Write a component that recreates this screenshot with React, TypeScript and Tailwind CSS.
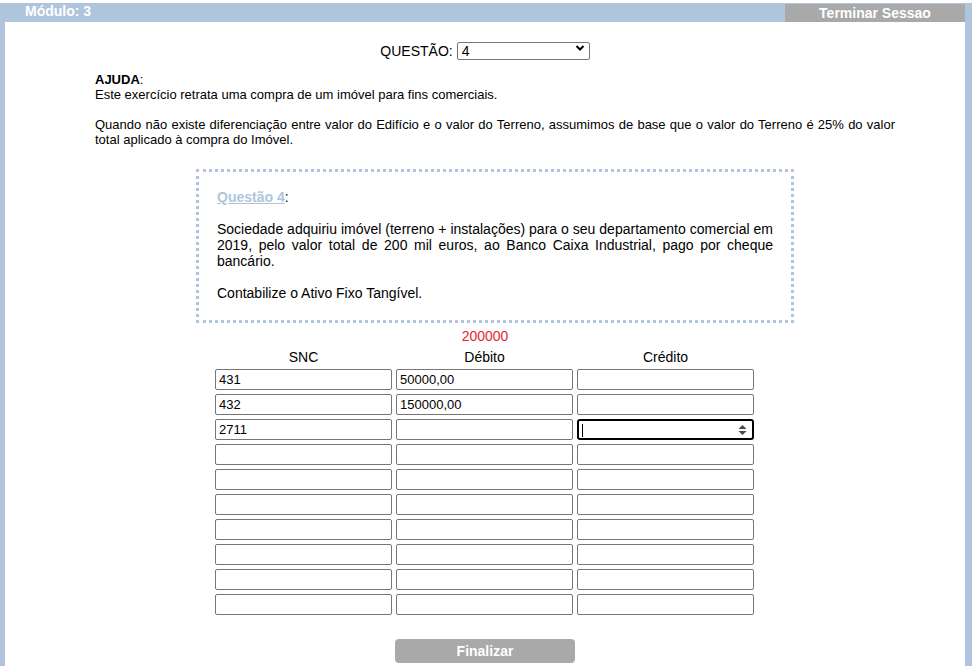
import React from 'react';

const rows: [string, string, string][] = [
  ['431', '50000,00', ''],
  ['432', '150000,00', ''],
  ['2711', '', ''],
  ['', '', ''],
  ['', '', ''],
  ['', '', ''],
  ['', '', ''],
  ['', '', ''],
  ['', '', ''],
  ['', '', ''],
];

const cellClass =
  'w-[177px] h-[21px] border border-[#767676] rounded-[2px] bg-white px-[3px] text-[13px] text-black outline-none';

const FocusedCell: React.FC = () => (
  <div className="relative w-[177px] h-[21px] border-2 border-black rounded-[3px] bg-white">
    <span className="absolute left-[3px] top-[3px] w-px h-[13px] bg-black" />
    <svg className="absolute right-[5px] top-[3px]" width="9" height="12" viewBox="0 0 9 12">
      <path d="M4.5 1 L8.5 5 L0.5 5 Z" fill="#4a4a4a" />
      <path d="M4.5 11 L8.5 7 L0.5 7 Z" fill="#4a4a4a" />
    </svg>
  </div>
);

export default function App() {
  return (
    <div className="w-[972px] h-[666px] overflow-hidden bg-white pt-[3px] font-['Liberation_Sans',Arial,sans-serif] text-black">
      <div className="h-[663px] bg-[#b0c4de] pl-[5px] pr-[7px] flex flex-col">
        <header className="h-[19px] flex items-stretch justify-between">
          <span className="pl-[20px] text-[14px] font-bold text-white leading-[16px]">Módulo: 3</span>
          <button className="mt-[1px] w-[180px] bg-[#a9a9a9] text-white text-[14px] font-bold leading-[18px] text-center">
            Terminar Sessao
          </button>
        </header>

        <main className="flex-1 bg-white flex flex-col">
          <div className="mt-[17px] flex items-center justify-center gap-[4px]">
            <label className="text-[14px]">QUESTÃO:</label>
            <div className="relative">
              <select
                defaultValue="4"
                className="appearance-none w-[133px] h-[18px] border border-[#767676] rounded-[2px] bg-white pl-[4px] text-[14px] leading-[16px] text-black"
              >
                <option value="1">1</option>
                <option value="2">2</option>
                <option value="3">3</option>
                <option value="4">4</option>
              </select>
              <svg className="absolute right-[5px] top-[5px] pointer-events-none" width="10" height="8" viewBox="0 0 10 8">
                <path d="M1.5 2 L5 5.5 L8.5 2" stroke="#000" strokeWidth="2" fill="none" />
              </svg>
            </div>
          </div>

          <div className="ml-[90px] w-[800px] mt-[9px] text-[13px] leading-[15px] text-justify">
            <p>
              <b>AJUDA</b>:
            </p>
            <p>Este exercício retrata uma compra de um imóvel para fins comerciais.</p>
            <p className="mt-[15px]">
              Quando não existe diferenciação entre valor do Edifício e o valor do Terreno, assumimos de base que o
              valor do Terreno é 25% do valor total aplicado à compra do Imóvel.
            </p>

            <div className="mx-auto mt-[22px] w-[598px] border-[3px] border-dotted border-[#b0c4de] px-[18px] pt-[17px] pb-[19px] text-[14px] leading-[16px]">
              <p>
                <a href="#" className="font-bold text-[#b0c4de] underline">
                  Questão 4
                </a>
                :
              </p>
              <p className="mt-[16px] text-justify">
                Sociedade adquiriu imóvel (terreno + instalações) para o seu departamento comercial em 2019, pelo valor
                total de 200 mil euros, ao Banco Caixa Industrial, pago por cheque bancário.
              </p>
              <p className="mt-[16px]">Contabilize o Ativo Fixo Tangível.</p>
            </div>
          </div>

          <p className="mt-[5px] text-center text-[14px] leading-[16px] text-[#e3262e]">200000</p>

          <div className="mt-[5px] flex justify-center pr-[1px]">
            <div className="flex flex-col gap-[4px]">
              <div className="grid grid-cols-[177px_177px_177px] gap-x-[4px] text-[14px] leading-[16px] text-center">
                <span>SNC</span>
                <span>Débito</span>
                <span>Crédito</span>
              </div>
              {rows.map((r, i) => (
                <div key={i} className="grid grid-cols-[177px_177px_177px] gap-x-[4px]">
                  <input readOnly value={r[0]} className={cellClass} />
                  <input readOnly value={r[1]} className={cellClass} />
                  {i === 2 ? <FocusedCell /> : <input readOnly value={r[2]} className={cellClass} />}
                </div>
              ))}
            </div>
          </div>

          <div className="mt-[24px] flex justify-center">
            <button className="w-[180px] h-[24px] rounded-[4px] bg-[#a9a9a9] text-white text-[14px] font-bold">
              Finalizar
            </button>
          </div>
        </main>
      </div>
    </div>
  );
}
